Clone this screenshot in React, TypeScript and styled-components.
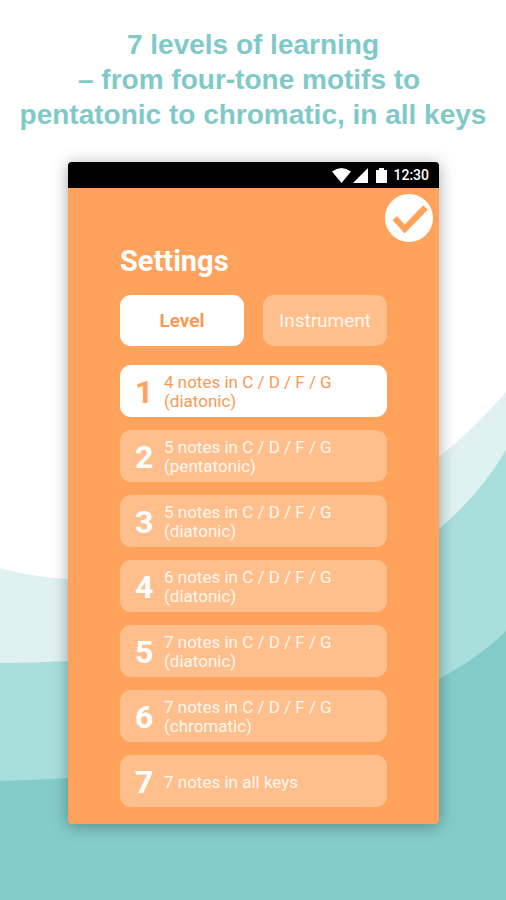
import { useState } from "react";
import styled, { createGlobalStyle } from "styled-components";

const orange = "#ffa25b";
const teal = "#7fcac8";

const GlobalStyle = createGlobalStyle`
  *, *::before, *::after { box-sizing: border-box; }
  body { margin: 0; background: #fff; }
`;

const Page = styled.main`
  position: relative;
  min-height: 100vh;
  padding: 27px 16px 76px;
  font-family: Roboto, sans-serif;
  overflow: hidden;
`;

const Waves = styled.svg`
  position: absolute;
  inset: 0;
  width: 100%;
  height: 100%;
`;

const Headline = styled.h1`
  position: relative;
  margin: 0 0 30px;
  color: ${teal};
  font: bold 28px/35px "Liberation Sans", Arial, sans-serif;
  text-align: center;
  white-space: nowrap;
`;

const Phone = styled.section`
  position: relative;
  margin: 0 51px 0 52px;
  border-radius: 4px;
  overflow: hidden;
  background: ${orange};
  box-shadow: 0 2px 16px rgba(0, 0, 0, 0.34);
`;

const StatusBar = styled.div`
  display: flex;
  align-items: center;
  justify-content: flex-end;
  height: 26px;
  padding-right: 10px;
  background: #000;
  color: #fff;
  font-size: 14px;
  font-weight: 500;
`;

const StatusIcons = styled.svg`
  display: block;
  margin-right: 4px;
`;

const Header = styled.header`
  display: flex;
  justify-content: flex-end;
  padding: 6px 6px 0;
`;

const DoneButton = styled.button`
  width: 48px;
  height: 48px;
  padding: 0;
  border: 0;
  border-radius: 50%;
  background: #fff;
  cursor: pointer;

  svg { display: block; }
`;

const Content = styled.div`
  padding: 2px 52px 17px;
`;

const Title = styled.h2`
  margin: 0 0 17px;
  color: #fff;
  font-size: 29px;
  font-weight: 700;
  line-height: 34px;
`;

const Tabs = styled.div`
  display: grid;
  grid-template-columns: 1fr 1fr;
  gap: 19px;
  margin-bottom: 19px;
`;

const Choice = styled.button<{ $active: boolean }>`
  border: 0;
  border-radius: 11px;
  background: ${(p) => (p.$active ? "#fff" : "#ffbf8d")};
  color: ${(p) => (p.$active ? "#f79a54" : "#fff7ee")};
  font-family: inherit;
  cursor: pointer;
`;

const Tab = styled(Choice)`
  height: 51px;
  padding: 0;
  font-size: 19px;
  font-weight: ${(p) => (p.$active ? 700 : 400)};
`;

const LevelList = styled.ul`
  display: grid;
  gap: 13px;
  margin: 0;
  padding: 0;
  list-style: none;
`;

const LevelButton = styled(Choice)`
  display: flex;
  align-items: center;
  width: 100%;
  min-height: 52px;
  padding: 2px 15px 0;
  font-size: 17px;
  line-height: 19px;
  text-align: left;
`;

const LevelNumber = styled.span<{ $active: boolean }>`
  flex: none;
  width: 29px;
  color: ${(p) => (p.$active ? orange : "#fff")};
  font-size: 32px;
  font-weight: 700;
`;

const LevelText = styled.span`
  display: grid;
`;

const levels = [
  ["4 notes in C / D / F / G", "(diatonic)"],
  ["5 notes in C / D / F / G", "(pentatonic)"],
  ["5 notes in C / D / F / G", "(diatonic)"],
  ["6 notes in C / D / F / G", "(diatonic)"],
  ["7 notes in C / D / F / G", "(diatonic)"],
  ["7 notes in C / D / F / G", "(chromatic)"],
  ["7 notes in all keys"],
];

const tabs = ["Level", "Instrument"];

export default function App() {
  const [tab, setTab] = useState("Level");
  const [level, setLevel] = useState(0);

  return (
    <Page>
      <GlobalStyle />
      <Waves viewBox="0 0 506 900" preserveAspectRatio="none" aria-hidden="true">
        <path fill="#dff1f0" d="M0 568Q32 577 68 579C210 588 340 547 439 457Q475 428 506 392V900H0Z" />
        <path fill="#a8dfdd" d="M0 663Q34 663 68 661C220 654 350 606 439 529Q481 493 506 450V900H0Z" />
        <path fill="#84ccca" d="M0 781Q34 780 68 778C210 772 340 732 439 679Q481 656 506 631V900H0Z" />
      </Waves>
      <Headline>
        7 levels of learning
        <br />– from four-tone motifs to&nbsp;
        <br />
        pentatonic to chromatic, in all keys
      </Headline>
      <Phone>
        <StatusBar>
          <StatusIcons width="58" height="18" viewBox="0 0 58 18" fill="#fff" aria-hidden="true">
            <path d="M1 5.500Q10.500 -1.500 20 5.500L10.500 17Z" />
            <path d="M37 2V17H22Z" />
            <path d="M45 4H48V2H53V4H56V17H45Z" />
          </StatusIcons>
          <span>12:30</span>
        </StatusBar>
        <Header>
          <DoneButton type="button" aria-label="Done">
            <svg width="48" height="48" viewBox="0 0 48 48" fill="none" aria-hidden="true">
              <path d="M9.800 24L19.700 35L40.500 13.500" stroke={orange} strokeWidth="6.200" />
            </svg>
          </DoneButton>
        </Header>
        <Content>
          <Title>Settings</Title>
          <Tabs>
            {tabs.map((name) => (
              <Tab
                key={name}
                type="button"
                $active={tab === name}
                aria-pressed={tab === name}
                onClick={() => setTab(name)}
              >
                {name}
              </Tab>
            ))}
          </Tabs>
          <LevelList>
            {levels.map((lines, i) => (
              <li key={i}>
                <LevelButton
                  type="button"
                  $active={level === i}
                  aria-pressed={level === i}
                  onClick={() => setLevel(i)}
                >
                  <LevelNumber $active={level === i}>{i + 1}</LevelNumber>
                  <LevelText>
                    {lines.map((line) => (
                      <span key={line}>{line}</span>
                    ))}
                  </LevelText>
                </LevelButton>
              </li>
            ))}
          </LevelList>
        </Content>
      </Phone>
    </Page>
  );
}
